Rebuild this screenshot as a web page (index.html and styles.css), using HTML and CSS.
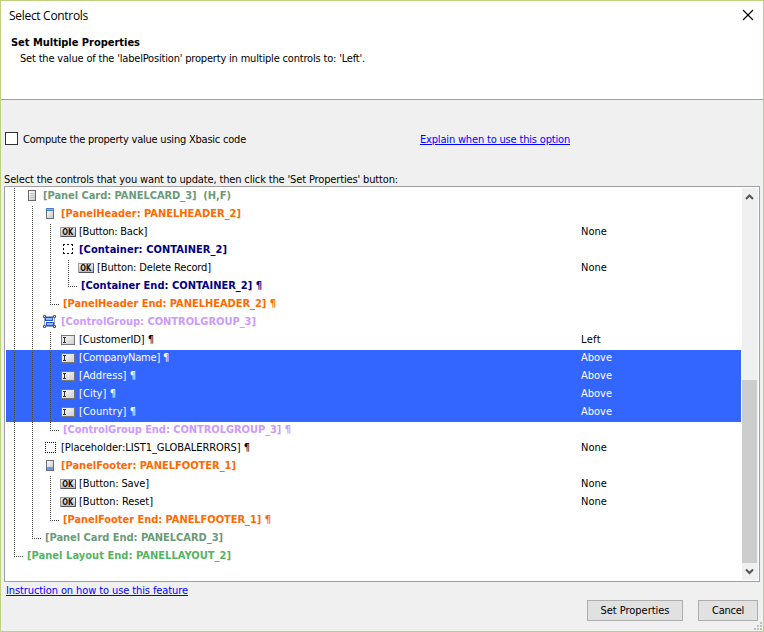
FILE: index.html
```html
<!DOCTYPE html>
<html lang="en">
<head>
<meta charset="utf-8">
<title>Select Controls</title>
<link rel="stylesheet" href="styles.css">
</head>
<body>
<svg class="defs" width="0" height="0">
  <defs>
    <linearGradient id="grey" x1="0" y1="0" x2="1" y2="1"><stop offset="0" stop-color="#fff"/><stop offset="1" stop-color="#c4c4c4"/></linearGradient>
    <linearGradient id="field" x1="0" y1="0" x2="1" y2="1"><stop offset="0" stop-color="#fafafa"/><stop offset="1" stop-color="#cfcfcf"/></linearGradient>
    <linearGradient id="key" x1="0" y1="0" x2="0" y2="1"><stop offset="0" stop-color="#f4f4f8"/><stop offset="1" stop-color="#b8b8c2"/></linearGradient>
  </defs>
</svg>
<div class="dialog">
  <header class="head">
    <div class="titlebar">
      <span class="title" data-w="79">Select Controls</span>
      <svg class="close" width="12" height="12" viewBox="0 0 12 12"><path d="M1 1L11 11M11 1L1 11" stroke="#000" stroke-width="1.15" fill="none"/></svg>
    </div>
    <h1><span data-w="129">Set Multiple Properties</span></h1>
    <p><span data-w="345">Set the value of the 'labelPosition' property in multiple controls to: 'Left'.</span></p>
  </header>
  <div class="options">
    <label class="check"><i class="box"></i><span data-w="223">Compute the property value using Xbasic code</span></label>
    <a class="link" data-w="150">Explain when to use this option</a>
  </div>
  <div class="prompt"><span data-w="394">Select the controls that you want to update, then click the 'Set Properties' button:</span></div>
  <div class="list">
    <div class="rows" id="rows"></div>
    <div class="scroll">
      <svg class="arrow" width="16" height="17" viewBox="0 0 16 17"><path d="M4 11L7.5 7.5L11 11" stroke="#555" stroke-width="2" fill="none"/></svg>
      <div class="track"><div class="thumb"></div></div>
      <svg class="arrow" width="16" height="17" viewBox="0 0 16 17"><path d="M4 6.5L7.5 10L11 6.5" stroke="#555" stroke-width="2" fill="none"/></svg>
    </div>
  </div>
  <div class="foot"><a class="link" data-w="182">Instruction on how to use this feature</a></div>
  <div class="buttons">
    <button class="btn wide"><span data-w="69">Set Properties</span></button>
    <button class="btn"><span data-w="32">Cancel</span></button>
  </div>
  <svg class="grip" width="8" height="8" viewBox="0 0 8 8"><path d="M6 0h2v2h-2zM3 3h2v2h-2zM6 3h2v2h-2zM0 6h2v2h-2zM3 6h2v2h-2zM6 6h2v2h-2z" fill="#bfbfbf"/></svg>
</div>
<script src="tree.js"></script>
</body>
</html>
```
FILE: tree.js
```js
const icons = {
  card: '<svg width="8" height="12" viewBox="0 0 8 12"><rect x=".5" y=".5" width="7" height="10" fill="url(#grey)" stroke="#686868"/><path d="M2 3.5h4M2 5.5h4M2 7.5h4" stroke="#c4c4c4"/></svg>',
  header: '<svg width="8" height="12" viewBox="0 0 8 12"><rect x=".5" y=".5" width="7" height="10" fill="url(#grey)" stroke="#68707c"/><path d="M0 0h8v3h-8z" fill="#4d7fc8"/><path d="M1 1h6v1h-6z" fill="#82aee8"/></svg>',
  footer: '<svg width="8" height="12" viewBox="0 0 8 12"><rect x=".5" y=".5" width="7" height="10" fill="url(#grey)" stroke="#68707c"/><path d="M1 7h6v3h-6z" fill="#6f9bdc"/></svg>',
  ok: '<svg width="16" height="10" viewBox="0 0 16 10"><rect x=".5" y=".5" width="15" height="9" fill="url(#key)" stroke="#9a9aa4"/><path d="M1 9.5h15M15.5 1v9" stroke="#55555d"/><text x="7.800" y="8" text-anchor="middle" textLength="11" lengthAdjust="spacingAndGlyphs" class="key">OK</text></svg>',
  box: '<svg width="10" height="12" viewBox="0 0 10 12" shape-rendering="crispEdges"><path d="M0 .5h2M4 .5h2M8 .5h2M0 9.5h2M4 9.5h2M8 9.5h2M.5 0v2M.5 4v2M.5 8v2M9.500 0v2M9.500 4v2M9.500 8v2" stroke="#111"/></svg>',
  dots: '<svg width="11" height="12" viewBox="0 0 11 12" shape-rendering="crispEdges"><path d="M0 .5h11M0 10.5h11M.5 0v11M10.500 0v11" stroke="#111" stroke-dasharray="1 1"/></svg>',
  group: '<svg width="14" height="14" viewBox="0 0 14 14"><path d="M2 1.5h9M2 11.5h9M1.500 2v9M11.500 2v9" stroke="#8ba0cc"/><rect x="2.500" y="2.500" width="7" height="3" fill="#8fb8fa" stroke="#2454cc"/><rect x="3.500" y="7.500" width="7" height="3" fill="#8fb8fa" stroke="#2454cc"/><path d="M.5.5h2v2h-2zM10.500.5h2v2h-2zM.5 10.500h2v2h-2zM10.500 10.500h2v2h-2z" fill="#fff" stroke="#42547e"/></svg>',
  field: '<svg width="14" height="10" viewBox="0 0 14 10"><rect x=".5" y=".5" width="13" height="9" fill="url(#field)" stroke="#777"/><path d="M2 2.500h3M3.500 3v4M2 7.500h3" stroke="#333"/></svg>'
};
// kind, depth, icon (null for a closing row), label, label width, value
const nodes = [
  ['card', 1, 'card', '[Panel Card: PANELCARD_3]  (H,F)', 188],
  ['panel', 2, 'header', '[PanelHeader: PANELHEADER_2]', 180],
  ['plain', 3, 'ok', '[Button: Back]', 68, 'None'],
  ['container', 3, 'box', '[Container: CONTAINER_2]', 148],
  ['plain', 4, 'ok', '[Button: Delete Record]', 114, 'None'],
  ['container', 4, null, '[Container End: CONTAINER_2] ¶', 181],
  ['panel', 3, null, '[PanelHeader End: PANELHEADER_2] ¶', 213],
  ['group', 2, 'group', '[ControlGroup: CONTROLGROUP_3]', 195],
  ['plain', 3, 'field', '[CustomerID] ¶', 75, 'Left'],
  ['plain selected', 3, 'field', '[CompanyName] ¶', 90, 'Above'],
  ['plain selected', 3, 'field', '[Address] ¶', 57, 'Above'],
  ['plain selected', 3, 'field', '[City] ¶', 37, 'Above'],
  ['plain selected', 3, 'field', '[Country] ¶', 57, 'Above'],
  ['group', 3, null, '[ControlGroup End: CONTROLGROUP_3] ¶', 228],
  ['plain', 2, 'dots', '[Placeholder:LIST1_GLOBALERRORS] ¶', 189, 'None'],
  ['panel', 2, 'footer', '[PanelFooter: PANELFOOTER_1]', 175],
  ['plain', 3, 'ok', '[Button: Save]', 70, 'None'],
  ['plain', 3, 'ok', '[Button: Reset]', 74, 'None'],
  ['panel', 3, null, '[PanelFooter End: PANELFOOTER_1] ¶', 208],
  ['card', 2, null, '[Panel Card End: PANELCARD_3]', 178],
  ['layout', 1, null, '[Panel Layout End: PANELLAYOUT_2]', 204]
];
const valueWidths = { None: 26, Left: 20, Above: 31 };
document.getElementById('rows').innerHTML = nodes.map(([kind, depth, icon, label, w, value]) => {
  let guides = '';
  for (let i = 1; i <= depth; i++) guides += `<i class="guide${!icon && i === depth ? ' elbow' : ''}"></i>`;
  const lead = icon ? `<span class="icon">${icons[icon]}</span>` : '';
  return `<div class="row ${kind}${icon ? '' : ' end'}"><div class="name">${guides}${lead}<span class="label" data-w="${w}">${label}</span></div>` +
    (value ? `<span class="value" data-w="${valueWidths[value]}">${value}</span>` : '') + '</div>';
}).join('');

// Track each label so that it fills its nominal width.
document.querySelectorAll('[data-w]').forEach(el => {
  const gap = (Number(el.dataset.w) - el.getBoundingClientRect().width) / el.textContent.length;
  el.style.letterSpacing = gap.toFixed(3) + 'px';
});
```
FILE: styles.css
```css
* { box-sizing: border-box; }
body { margin: 0; font-family: "DejaVu Sans Condensed", "DejaVu Sans", sans-serif; font-stretch: condensed; font-size: 11px; line-height: 16px; color: #000; }
span, a { white-space: pre; }
.defs { position: absolute; }
.dialog { position: relative; width: 764px; height: 632px; border: 1px solid #bdd17f; background: #f0f0f0; display: flex; flex-direction: column; }
.head { height: 99px; background: #fff; border-bottom: 1px solid #a0a0a0; }
.titlebar { height: 34px; display: flex; justify-content: space-between; padding: 8px 9px 0 8px; }
.title { font-family: "Open Sans", "Noto Sans", sans-serif; font-stretch: normal; font-size: 12px; line-height: 14px; }
h1 { margin: 0; padding-left: 10px; font-size: inherit; line-height: 16px; height: 16px; }
p { margin: 0; padding-left: 19px; }
.options { height: 72px; padding-top: 32px; display: flex; }
.check { width: 415px; padding-left: 4px; display: flex; }
.box { width: 13px; height: 13px; margin-right: 5px; border: 1px solid #333; background: #fff; }
.link { color: #00f; text-decoration: underline; }
.options .link { margin-left: 4px; }
.prompt { height: 14px; padding-left: 3px; }
.list { width: 756px; height: 396px; margin-left: 3px; border: 1px solid #a0a0a0; background: #fff; display: flex; padding: 1px; }
.rows { width: 735px; flex: none; }
.row { height: 18px; display: flex; }
.name { width: 575px; padding-left: 8px; display: flex; }
.guide { flex: none; width: 18px; height: 18px; background: repeating-linear-gradient(#444 0 1px, transparent 1px 2px) 0 0 / 1px 100% no-repeat; }
.elbow { background: repeating-linear-gradient(#444 0 1px, transparent 1px 2px) 0 0 / 1px 9px no-repeat, repeating-linear-gradient(90deg, #444 0 1px, transparent 1px 2px) 0 8px / 9px 1px no-repeat; }
.icon { flex: none; width: 20px; height: 16px; margin: 0 1px 0 -10px; display: flex; align-items: center; justify-content: center; }
.end .label { margin-left: -5px; }
.card, .panel, .container, .group, .layout { font-weight: bold; }
.card { color: #6b9a78; }
.panel { color: #ff6a00; }
.container { color: #000080; }
.group { color: #cc99ff; }
.layout { color: #53b563; }
.selected { background: #3366ff; color: #fff; }
.key { font: bold 8px "DejaVu Sans", sans-serif; fill: #111; }
.scroll { width: 16px; margin: 0 0 0 1px; background: #f0f0f0; display: flex; flex-direction: column; }
.arrow { flex: none; }
.track { flex: 1; display: flex; flex-direction: column; justify-content: flex-end; }
.thumb { width: 15px; height: 183px; background: #cdcdcd; }
.foot { padding: 1px 0 0 5px; height: 18px; }
.buttons { display: flex; justify-content: flex-end; gap: 15px; padding-right: 5px; }
.btn { width: 60px; height: 21px; padding: 1px 0 0; border: 1px solid #adadad; background: #e1e1e1; font: inherit; color: #000; }
.wide { width: 96px; }
.grip { position: absolute; right: 1px; bottom: 1px; }
```
